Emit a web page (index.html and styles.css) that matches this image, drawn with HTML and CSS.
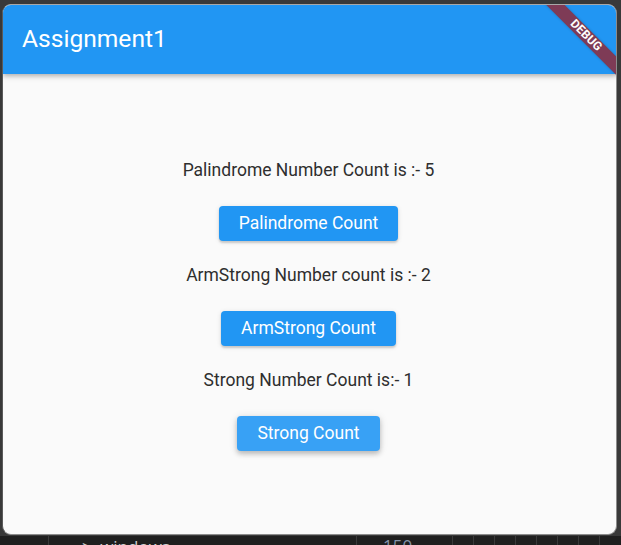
FILE: index.html
```html
<!DOCTYPE html>
<html>
<head>
<meta charset="utf-8">
<link rel="stylesheet" href="styles.css">
</head>
<body>
<div class="screen">
  <div class="window">
    <header class="appbar">
      <h1 class="title">Assignment1</h1>
    </header>
    <main class="content">
      <p class="label">Palindrome Number Count is :- 5</p>
      <button class="btn">Palindrome Count</button>
      <p class="label">ArmStrong Number count is :- 2</p>
      <button class="btn">ArmStrong Count</button>
      <p class="label">Strong Number Count is:- 1</p>
      <button class="btn btn-hover">Strong Count</button>
    </main>
    <div class="debug">DEBUG</div>
  </div>
  <div class="strip">
    <div class="cell c1"></div>
    <div class="cell c2"><span class="chev">&gt;</span> windows</div>
    <div class="cell c3">150</div>
    <div class="cell c4"></div>
    <div class="cell c4"></div>
    <div class="cell c4"></div>
    <div class="cell c4"></div>
    <div class="cell c4"></div>
    <div class="cell c4"></div>
    <div class="cell c4"></div>
    <div class="cell c5"></div>
  </div>
</div>
</body>
</html>
```

FILE: styles.css
```css
html, body {
  margin: 0;
  padding: 0;
  height: 100%;
  overflow: hidden;
}
body {
  background: #393939;
  font-family: Roboto, "Noto Sans", sans-serif;
}
.screen {
  display: flex;
  flex-direction: column;
  padding-top: 4px;
  padding-left: 2px;
}
.window {
  position: relative;
  width: 613px;
  height: 529px;
  border: 1px solid #9a9a9a;
  border-color: #a8a8a8 #8c8c8c #8c8c8c #5a5a5a;
  border-radius: 9px;
  overflow: hidden;
  background: #fafafa;
  display: flex;
  flex-direction: column;
}
.appbar {
  height: 69px;
  flex: none;
  background: #2196f3;
  display: flex;
  align-items: center;
  padding-left: 19px;
  box-shadow: 0 2px 4px rgba(0,0,0,0.22), 0 4px 6px rgba(0,0,0,0.08);
  position: relative;
  z-index: 1;
}
.title {
  margin: 0;
  color: #fff;
  font-size: 24.6px;
  font-weight: 400;
  padding-bottom: 2px;
}
.content {
  flex: 1;
  display: flex;
  flex-direction: column;
  align-items: center;
  justify-content: center;
  padding-top: 2px;
  padding-right: 2px;
}
.label {
  margin: 0;
  font-size: 17.5px;
  line-height: 21px;
  color: #2e2e2e;
}
.btn {
  margin: 25px 0 24px;
  height: 35px;
  padding: 0 20px;
  border: none;
  border-radius: 4px;
  background: #2196f3;
  color: #fff;
  font-family: Roboto, sans-serif;
  font-size: 17.5px;
  font-weight: 400;
  box-shadow: 0 2px 2px rgba(0,0,0,0.14), 0 1px 5px rgba(0,0,0,0.12);
}
.btn:last-child {
  margin-bottom: 0;
}
.btn-hover {
  background: #38a1f5;
  box-shadow: 0 3px 5px rgba(0,0,0,0.2), 0 1px 8px rgba(0,0,0,0.12);
}
.debug {
  position: absolute;
  top: 24px;
  right: -30px;
  width: 120px;
  height: 13px;
  line-height: 13px;
  background: #7e3b56;
  color: #fff;
  font-size: 12px;
  font-weight: 700;
  text-align: center;
  letter-spacing: 0.1px;
  transform: rotate(45deg);
  z-index: 2;
  box-shadow: 0 0 3px rgba(0,0,0,0.2);
}
.strip {
  margin-left: -2px;
  margin-top: 1px;
  height: 20px;
  background: #1f1f1f;
  display: flex;
  color: #cfcfcf;
  font-family: "Open Sans", "Noto Sans", sans-serif;
  font-size: 17px;
  line-height: 20px;
}
.cell {
  flex: none;
  border-right: 1px solid #3a3a3a;
  height: 20px;
  box-sizing: border-box;
}
.c1 { width: 49px; }
.c2 { width: 308px; padding-left: 33px; padding-top: 1px; }
.chev { color: #cfcfcf; margin-right: 4px; }
.c3 { width: 96px; padding-left: 26px; color: #8593a8; padding-top: 0px; }
.c4 { width: 21px; }
.c5 { width: 30px; border-right: none; }
```
